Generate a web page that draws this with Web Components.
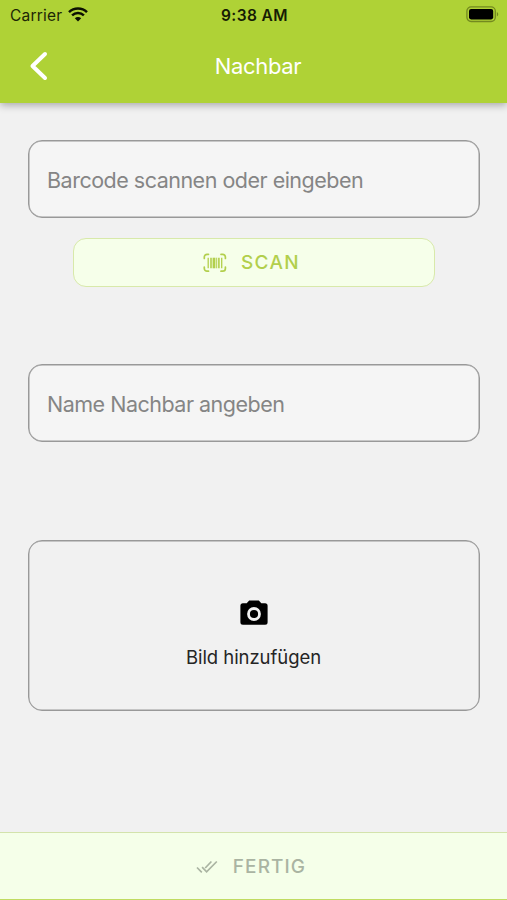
<!DOCTYPE html>
<html lang="de">
<head>
<meta charset="utf-8">
<title>Nachbar</title>
<style>
html,body{margin:0;height:100%}
body{font-family:Inter,"Liberation Sans",sans-serif;background:#f1f1f1;overflow:hidden}
</style>
</head>
<body>
<neighbour-page></neighbour-page>
<script>
function define(name, html) {
  const template = document.createElement('template');
  template.innerHTML = html;
  customElements.define(name, class extends HTMLElement {
    constructor() {
      super();
      this.attachShadow({mode: 'open'}).append(template.content.cloneNode(true));
    }
  });
}

define('status-bar', `<style>
:host{display:grid;grid-template-columns:1fr auto 1fr;align-items:center;height:30px;padding:0 8px 0 10px;box-sizing:border-box;color:#1d2605;font-size:15.5px;line-height:20px}
.left{display:flex;align-items:center;gap:6px}
.carrier{letter-spacing:.2px;padding-top:1px}
.time{font-weight:600;font-size:15.5px;letter-spacing:.4px;color:#161c04;padding-top:1px}
.battery{justify-self:end;margin-top:-2px}
svg{display:block}
.left svg{margin-top:-1px}
</style>
<div class="left"><span class="carrier">Carrier</span>
<svg width="20" height="15" viewBox="0 0 20 15" fill="none" stroke="#0c1002" stroke-width="2.5"><path d="M1 5.1C6 .3 14 .3 19 5.1M4.1 8.4c3.3-3.1 8.5-3.1 11.8 0"/><path fill="#0c1002" stroke="none" d="M10 14.6 6.8 11.3c1.8-1.6 4.6-1.6 6.4 0z"/></svg></div>
<span class="time">9:38 AM</span>
<svg class="battery" width="33" height="17" viewBox="0 0 33 17"><rect x=".9" y=".9" width="28.4" height="14.6" rx="4.2" fill="none" stroke="#73891f" stroke-width="1.3"/><rect x="3" y="3" width="24.2" height="10.4" rx="2.1" fill="#000"/><path d="M30.9 6c1.8.7 1.8 3.7 0 4.4z" fill="#73891f"/></svg>`);

define('title-bar', `<style>
:host{display:grid;grid-template-columns:84px 1fr 75px;align-items:center;height:71px;color:#fff}
.title{text-align:center;font-size:22px;line-height:28px;letter-spacing:-.35px}
svg{display:block;margin-left:28px}
</style>
<svg width="22" height="32" viewBox="0 0 22 32" fill="none" stroke="#fff" stroke-width="4" stroke-linecap="round" stroke-linejoin="round"><path d="M17 4 4.5 16 17 28"/></svg>
<span class="title"><slot></slot></span>`);

define('app-header', `<style>
:host{display:block;height:103px;flex:none;background:#afd236;box-shadow:0 2px 8px rgba(0,0,0,.32)}
</style><status-bar></status-bar><slot></slot>`);

define('text-field', `<style>
:host{display:flex;align-items:center;height:78px;box-sizing:border-box;border:1px solid #999;box-shadow:inset 0 0 0 .5px #999;border-radius:14px;padding:2px 18px 0;background:#f5f5f5;color:#858585;font-size:21.5px;line-height:28px;white-space:nowrap}
span{letter-spacing:-.5px}
</style><span><slot></slot></span>`);

define('barcode-icon', `<style>:host{display:block}svg{display:block}</style>
<svg width="24" height="20" viewBox="0 0 24 20" fill="none" stroke="#b2cf4c" stroke-width="1.7" stroke-linecap="round"><path d="M1.3 5.5V4a2.7 2.7 0 0 1 2.7-2.7h1.5M18 1.3h1.7A2.7 2.7 0 0 1 22.4 4v1.5M1.3 14V15.5A2.7 2.7 0 0 0 4 18.2h1.5M18 18.2h1.7a2.7 2.7 0 0 0 2.7-2.7V14"/><path stroke-linecap="butt" d="M5.2 4.7v10.6M18.7 4.7v10.6" stroke-width="1.3"/><path stroke-linecap="butt" d="M8 4.7v10.6M15.9 4.7v10.6" stroke-width="1.6"/><path stroke-linecap="butt" d="M11 4.7v10.6" stroke-width="2.8"/><path stroke-linecap="butt" d="M13.7 4.7v10.6" stroke-width="1"/></svg>`);

define('check-icon', `<style>:host{display:block}svg{display:block}</style>
<svg width="22" height="14" viewBox="0 0 22 14" fill="none" stroke="#aab4a2" stroke-width="1.7"><path d="m1 7.5 4.8 4.8M6.1 7.2l4.5 4.7L20.8 1.5M9.2 8l6.2-6.5"/></svg>`);

define('scan-button', `<style>
:host{display:flex;align-items:center;justify-content:center;gap:14px;width:362px;height:49px;margin:20px auto 0;padding-right:5px;box-sizing:border-box;border:1.3px solid #d8e9aa;border-radius:13px;background:#f6ffea;color:#b2cf4c;font-size:19px;font-weight:500;letter-spacing:1.4px;line-height:24px}
</style><barcode-icon></barcode-icon><span><slot></slot></span>`);

define('photo-picker', `<style>
:host{display:flex;flex-direction:column;align-items:center;height:171px;box-sizing:border-box;border:1px solid #999;box-shadow:inset 0 0 0 .4px #999;border-radius:14px;padding-top:59px;color:#252525;font-size:18.5px;line-height:24px}
svg{display:block;margin-bottom:19px}
span{letter-spacing:-.05px;margin-right:1px}
</style>
<svg width="28" height="26" viewBox="0 0 28 26"><path d="M9.2.5h9.6l2.5 2.7h3.8a2.5 2.5 0 0 1 2.5 2.5v16.6a2.5 2.5 0 0 1-2.5 2.5H2.9a2.5 2.5 0 0 1-2.5-2.5V5.7a2.5 2.5 0 0 1 2.5-2.5h3.8z"/><circle cx="14" cy="14" r="5.5" fill="none" stroke="#f1f1f1" stroke-width="2.8"/></svg>
<span><slot></slot></span>`);

define('done-bar', `<style>
:host{display:flex;align-items:center;justify-content:center;gap:15px;height:68px;flex:none;padding:2px 5px 0 0;box-sizing:border-box;border-top:1px solid #d3e3ac;border-bottom:1px solid #c0dc62;background:#f5ffe9;color:#aab4a2;font-size:19px;font-weight:500;letter-spacing:1.1px;line-height:24px}
</style><check-icon></check-icon><span><slot></slot></span>`);

define('neighbour-page', `<style>
:host{display:flex;flex-direction:column;width:507px;height:900px;background:#f1f1f1}
main{flex:1;padding:37px 27px 0 28px}
.name{margin-top:77px}
photo-picker{margin-top:98px}
</style>
<app-header><title-bar>Nachbar</title-bar></app-header>
<main>
<text-field>Barcode scannen oder eingeben</text-field>
<scan-button>SCAN</scan-button>
<text-field class="name">Name Nachbar angeben</text-field>
<photo-picker>Bild hinzufügen</photo-picker>
</main>
<done-bar>FERTIG</done-bar>`);
</script>
</body>
</html>
